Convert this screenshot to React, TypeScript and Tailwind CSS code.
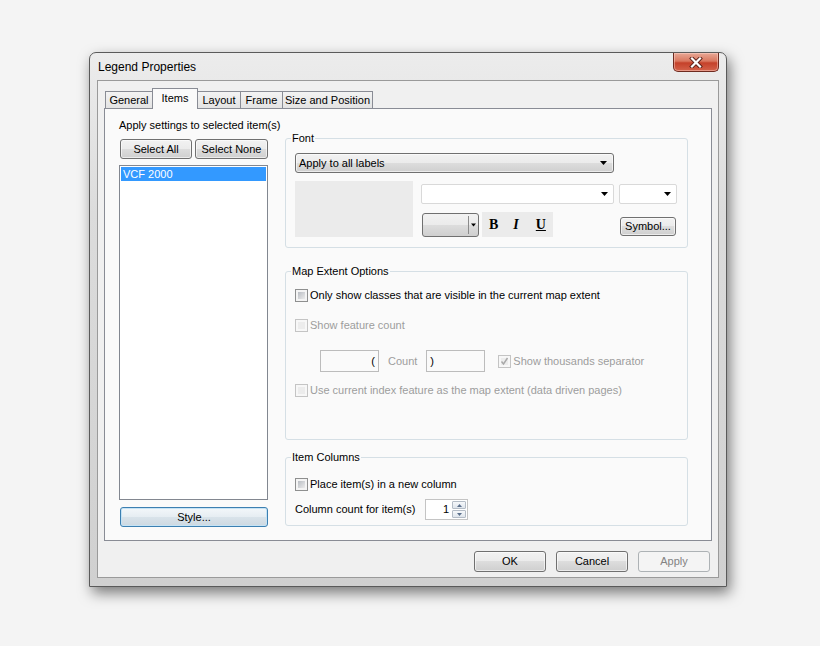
import type { ReactNode } from "react";

const Arrow = ({ className = "" }: { className?: string }) => (
  <svg width="7" height="4" viewBox="0 0 7 4" className={className}>
    <path d="M0 0h7L3.5 4z" fill="currentColor" />
  </svg>
);

const Checkbox = ({ checked = false, disabled = false }: { checked?: boolean; disabled?: boolean }) => (
  <span
    className={`flex h-[13px] w-[13px] shrink-0 items-center justify-center border p-[2px] ${
      disabled ? "border-[#c4c4c4] bg-[#f7f7f7]" : "border-[#8e8f8f] bg-[#f4f4f4]"
    }`}
  >
    <span
      className={`relative block h-full w-full ${
        disabled ? "bg-[#ececec]" : "bg-[linear-gradient(135deg,#b9bdc3,#ebebeb)]"
      }`}
    >
      {checked && (
        <svg width="9" height="9" viewBox="0 0 9 9" className="absolute left-[-1px] top-[-1px]">
          <path d="M1.5 4.5l2 2.5 4-6" fill="none" stroke="#a8a8a8" strokeWidth="1.4" />
        </svg>
      )}
    </span>
  </span>
);

const Btn = ({
  children,
  className = "",
  kind = "normal",
}: {
  children: ReactNode;
  className?: string;
  kind?: "normal" | "focus" | "disabled";
}) => {
  const look =
    kind === "focus"
      ? "border-[#3c7fb1] bg-[linear-gradient(to_bottom,#f3f7fa_0%,#e6edf2_49%,#d9e3ea_50%,#cdd8e1_100%)] shadow-[inset_0_0_0_1px_#c5e3f5]"
      : kind === "disabled"
      ? "border-[#adb2b5] bg-[#f4f4f4] text-[#838383]"
      : "border-[#707070] bg-[linear-gradient(to_bottom,#f2f2f2_0%,#ebebeb_49%,#dddddd_50%,#cfcfcf_100%)] shadow-[inset_0_0_0_1px_rgba(255,255,255,0.6)]";
  return (
    <div className={`flex items-center justify-center whitespace-nowrap rounded-[3px] border ${look} ${className}`}>
      {children}
    </div>
  );
};

const Group = ({ title, className = "", children }: { title: string; className?: string; children: ReactNode }) => (
  <fieldset className={`rounded-[3px] border border-[#d5dfe5] ${className}`}>
    <legend className="ml-[5px] px-[1px] leading-[15px]">{title}</legend>
    {children}
  </fieldset>
);

const CloseButton = () => (
  <div className="flex h-[19px] w-[46px] items-center justify-center rounded-b-[5px] border border-t-0 border-[#6e2a1f] bg-[linear-gradient(to_bottom,#e8a896_0%,#d9775f_45%,#c5412a_55%,#d4634b_100%)] shadow-[inset_0_0_0_1px_rgba(255,220,210,0.45)]">
    <svg width="14" height="11" viewBox="0 0 14 11">
      <path d="M3 1.5l8 8M11 1.5l-8 8" stroke="#5a2018" strokeWidth="4" strokeLinecap="square" />
      <path d="M3 1.5l8 8M11 1.5l-8 8" stroke="#ffffff" strokeWidth="2.2" strokeLinecap="square" />
    </svg>
  </div>
);

const tabs = [
  { label: "General", w: "w-[48px]" },
  { label: "Items", w: "w-[46px]", active: true },
  { label: "Layout", w: "w-[44px]" },
  { label: "Frame", w: "w-[43px]" },
  { label: "Size and Position", w: "w-[91px]" },
];

export default function App() {
  return (
    <div className="h-[646px] w-[820px] overflow-hidden bg-[#f4f4f4] pl-[89px] pt-[52px] font-['Liberation_Sans',Arial,sans-serif] text-[11px] leading-[15px] text-black">
      <div className="flex h-[535px] w-[638px] flex-col rounded-t-[7px] border border-[#5a5a5a] bg-[linear-gradient(to_bottom,#ececec,#dcdcdc_30%,#d0d0d0)] shadow-[3px_6px_14px_rgba(0,0,0,0.5)]">
        {/* Title bar */}
        <div className="flex h-[27px] shrink-0 items-start justify-between pl-[8px] pr-[7px]">
          <span className="pt-[7px] text-[12px] leading-[15px]">Legend Properties</span>
          <CloseButton />
        </div>

        {/* Client area */}
        <div className="mx-[7px] mb-[8px] flex flex-1 flex-col border border-[#9a9a9a] bg-[#f0f0f0] pl-[6px] pt-[8px]">
          {/* Tabs */}
          <div className="flex h-[19px] items-end pl-[1px]">
            {tabs.map((t) =>
              t.active ? (
                <div
                  key={t.label}
                  className={`relative z-10 -mb-px -ml-px flex h-[21px] ${t.w} justify-center border border-b-0 border-[#898c95] bg-[#fafafa] pt-[2px]`}
                >
                  {t.label}
                </div>
              ) : (
                <div
                  key={t.label}
                  className={`-ml-px flex h-[17px] ${t.w} items-center justify-center border border-b-0 border-[#898c95] bg-[linear-gradient(to_bottom,#f3f3f3,#e3e3e3)] first:ml-0`}
                >
                  {t.label}
                </div>
              )
            )}
          </div>

          {/* Panel */}
          <div className="flex h-[433px] w-[608px] border border-[#898c95] bg-[#fafafa] pl-[14px] pt-[9px]">
            {/* Left column */}
            <div className="flex w-[149px] flex-col">
              <div className="h-[15px] whitespace-nowrap">Apply settings to selected item(s)</div>
              <div className="mt-[6px] flex gap-[3px] pl-[1px]">
                <Btn className="h-[20px] w-[72px]">Select All</Btn>
                <Btn className="h-[20px] w-[73px]">Select None</Btn>
              </div>
              <div className="mt-[6px] h-[335px] border border-[#828790] bg-white p-[1px]">
                <div className="h-[14px] bg-[#3399ff] pl-[2px] leading-[14px] text-white">VCF 2000</div>
              </div>
              <Btn kind="focus" className="ml-[1px] mt-[7px] h-[20px] w-[148px]">
                Style...
              </Btn>
            </div>

            {/* Right column */}
            <div className="ml-[17px] flex w-[403px] flex-col">
              <Group title="Font" className="mt-[13px] h-[117px]">
                <div className="pl-[9px] pt-[7px]">
                  <Btn className="h-[20px] w-[319px] !justify-between pl-[3px] pr-[6px]">
                    <span>Apply to all labels</span>
                    <Arrow />
                  </Btn>
                  <div className="mt-[8px] flex">
                    <div className="h-[56px] w-[118px] bg-[#ebebeb]" />
                    <div className="ml-[8px] flex w-[256px] flex-col">
                      <div className="mt-[3px] flex gap-[5px]">
                        <div className="flex h-[20px] w-[193px] items-center justify-end rounded-[2px] border border-[#d9d9d9] bg-white pr-[5px]">
                          <Arrow />
                        </div>
                        <div className="flex h-[20px] w-[58px] items-center justify-end rounded-[2px] border border-[#d9d9d9] bg-white pr-[5px]">
                          <Arrow />
                        </div>
                      </div>
                      <div className="mt-[8px] flex">
                        <div className="ml-[1px] mt-[1px] flex h-[24px] w-[57px] rounded-[3px] border border-[#707070] bg-[linear-gradient(to_bottom,#f2f2f2_0%,#ebebeb_49%,#dddddd_50%,#cfcfcf_100%)]">
                          <div className="my-[2px] w-[46px] border-r border-[#8a8a8a]" />
                          <div className="flex flex-1 items-center justify-center">
                            <Arrow className="w-[5px]" />
                          </div>
                        </div>
                        <div className="ml-[3px] flex h-[25px] w-[71px] items-center bg-[#ebebeb] pl-[7px] font-['Liberation_Serif',serif] text-[14px] font-bold">
                          <span>B</span>
                          <span className="ml-[15px] italic">I</span>
                          <span className="ml-[17px] underline">U</span>
                        </div>
                        <Btn className="ml-auto mr-[1px] mt-[5px] h-[19px] w-[56px]">Symbol...</Btn>
                      </div>
                    </div>
                  </div>
                </div>
              </Group>

              <Group title="Map Extent Options" className="mt-[16px] h-[176px]">
                <div className="pl-[9px] pt-[9px]">
                  <div className="flex items-center gap-[2px]">
                    <Checkbox />
                    <span>Only show classes that are visible in the current map extent</span>
                  </div>
                  <div className="mt-[15px] flex items-center gap-[2px] text-[#9d9d9d]">
                    <Checkbox disabled />
                    <span>Show feature count</span>
                  </div>
                  <div className="ml-[25px] mt-[17px] flex items-center text-[#9d9d9d]">
                    <div className="flex h-[22px] w-[59px] items-center justify-end border border-[#bcbcbc] bg-[#fafafa] pr-[3px] text-black">
                      (
                    </div>
                    <span className="ml-[9px]">Count</span>
                    <div className="ml-[9px] flex h-[22px] w-[59px] items-center border border-[#bcbcbc] bg-[#fafafa] pl-[3px] text-black">
                      )
                    </div>
                    <span className="ml-[13px]">
                      <Checkbox checked disabled />
                    </span>
                    <span className="ml-[2px]">Show thousands separator</span>
                  </div>
                  <div className="mt-[11px] flex items-center gap-[2px] text-[#9d9d9d]">
                    <Checkbox disabled />
                    <span>Use current index feature as the map extent (data driven pages)</span>
                  </div>
                </div>
              </Group>

              <Group title="Item Columns" className="mt-[10px] h-[76px]">
                <div className="pl-[9px] pt-[12px]">
                  <div className="flex items-center gap-[2px]">
                    <Checkbox />
                    <span>Place item(s) in a new column</span>
                  </div>
                  <div className="mt-[7px] flex items-center">
                    <span className="w-[130px]">Column count for item(s)</span>
                    <div className="flex h-[21px] w-[43px] border border-[#c4c4c4] bg-white">
                      <div className="flex flex-1 items-center justify-end pr-[3px]">1</div>
                      <div className="flex w-[15px] flex-col gap-px py-px pr-px">
                        <div className="flex flex-1 items-center justify-center rounded-[1px] border border-[#b4bcc6] bg-[linear-gradient(to_bottom,#f6f8fa,#dfe5ec)]">
                          <svg width="5" height="3" viewBox="0 0 5 3">
                            <path d="M0 3h5L2.5 0z" fill="#5b6f8c" />
                          </svg>
                        </div>
                        <div className="flex flex-1 items-center justify-center rounded-[1px] border border-[#b4bcc6] bg-[linear-gradient(to_bottom,#f6f8fa,#dfe5ec)]">
                          <svg width="5" height="3" viewBox="0 0 5 3">
                            <path d="M0 0h5L2.5 3z" fill="#5b6f8c" />
                          </svg>
                        </div>
                      </div>
                    </div>
                  </div>
                </div>
              </Group>
            </div>
          </div>

          {/* Bottom buttons */}
          <div className="mt-[10px] flex w-[606px] justify-end gap-[10px]">
            <Btn className="h-[21px] w-[72px]">OK</Btn>
            <Btn className="h-[21px] w-[72px]">Cancel</Btn>
            <Btn kind="disabled" className="h-[21px] w-[72px]">
              Apply
            </Btn>
          </div>
        </div>
      </div>
    </div>
  );
}
